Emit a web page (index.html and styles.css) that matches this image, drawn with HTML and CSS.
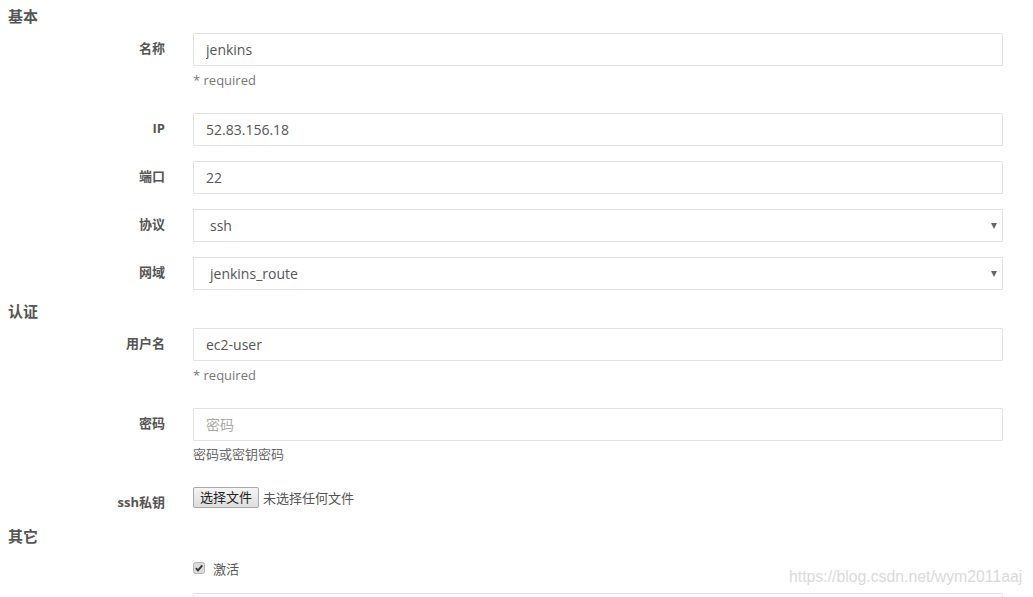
FILE: index.html
```html
<!DOCTYPE html>
<html><head>
<meta charset="utf-8">
<title>资产</title>
<link rel="stylesheet" href="styles.css">
</head><body>
<div class="asset_form">
	<h4 class="section">基本</h4>
	<div class="form_group">
		<label class="ctl_label">名称</label>
		<div class="ctl">
			<input type="text" class="textinput" value="jenkins">
			<p class="help">* required</p>
		</div>
	</div>
	<div class="form_group">
		<label class="ctl_label">IP</label>
		<div class="ctl"><input type="text" class="textinput" value="52.83.156.18"></div>
	</div>
	<div class="form_group">
		<label class="ctl_label">端口</label>
		<div class="ctl"><input type="text" class="textinput" value="22"></div>
	</div>
	<div class="form_group">
		<label class="ctl_label">协议</label>
		<div class="ctl"><div class="select"><span>ssh</span></div></div>
	</div>
	<div class="form_group last">
		<label class="ctl_label">网域</label>
		<div class="ctl"><div class="select"><span>jenkins_route</span></div></div>
	</div>

	<h4 class="section">认证</h4>
	<div class="form_group">
		<label class="ctl_label">用户名</label>
		<div class="ctl">
			<input type="text" class="textinput" value="ec2-user">
			<p class="help">* required</p>
		</div>
	</div>
	<div class="form_group">
		<label class="ctl_label">密码</label>
		<div class="ctl">
			<input type="password" class="textinput" placeholder="密码">
			<p class="help help_tip">密码或密钥密码</p>
		</div>
	</div>
	<div class="form_group file_group">
		<label class="ctl_label">ssh私钥</label>
		<div class="ctl file_ctl">
			<span class="file_btn">选择文件</span><span class="file_name">未选择任何文件</span>
		</div>
	</div>

	<h4 class="section">其它</h4>
	<div class="form_group check_group">
		<div class="ctl">
			<label class="check">
				<svg width="12" height="12" viewBox="0 0 12 12"><rect x="0.5" y="0.5" width="11" height="11" rx="2" fill="#dcdcdc" stroke="#b5b5b5"/><path d="M2.8 6.2 L5 8.4 L9.3 3.4" fill="none" stroke="#333" stroke-width="1.8"/></svg>
				<span>激活</span>
			</label>
		</div>
	</div>
	<div class="form_group">
		<div class="ctl"><input type="text" class="textinput"></div>
	</div>
</div>
<div class="watermark">https://blog.csdn.net/wym2011aaj</div>
</body></html>
```
FILE: styles.css
```css
html, body {margin: 0; padding: 0; background: #fff; overflow: hidden;}
body {font-family: "Open Sans", "Noto Sans CJK SC", sans-serif; color: #555; font-size: 13px;}
.asset_form {padding: 4px 30px 0 0;}
.section {margin: 0 0 5px 0; padding-left: 8px; font-size: 15px; line-height: 24px; font-weight: bold; color: #555;}
.form_group {display: grid; grid-template-columns: 165px 1fr; column-gap: 28px; margin-bottom: 15px;}
.form_group.last {margin-bottom: 9px;}
.ctl_label {padding-top: 7px; line-height: 16px; text-align: right; font-weight: bold; font-size: 13px; color: #555;}
.ctl {grid-column: 2;}
.textinput {display: block; box-sizing: border-box; width: 100%; height: 33px; margin: 0; padding: 0 12px; border: 1px solid #e3e3e3; border-radius: 1px; background: #fff; font-family: inherit; font-size: 14px; color: #555; outline: none;}
.textinput::placeholder {color: #aaa;}
.help {margin: 4px 0 8px 0; line-height: 20px; font-size: 13px; color: #777;}
.help_tip {margin-top: 3px; color: #666;}
.select {position: relative; box-sizing: border-box; height: 33px; line-height: 31px; padding: 0 16px; border: 1px solid #e3e3e3; font-size: 14px; color: #555;}
.select::after {content: ""; position: absolute; right: 5px; top: 13px; border-left: 3.5px solid transparent; border-right: 3.5px solid transparent; border-top: 6px solid #666;}
.file_group {margin-bottom: 14px;}
.file_ctl {display: flex; align-items: center; height: 21px;}
.file_btn {box-sizing: border-box; height: 21px; line-height: 19px; padding: 0 6px; border: 1px solid #a9a9a9; border-radius: 2px; background: linear-gradient(#f4f4f4, #dedede); color: #222; font-size: 13px;}
.file_name {margin-left: 4px; font-size: 13px; color: #555;}
.check_group {margin-bottom: 10px;}
.check {display: flex; align-items: center; height: 30px; color: #555; font-size: 13px;}
.check svg {margin-right: 8px;}
.watermark {position: absolute; left: 789px; top: 568px; font-family: "Liberation Sans", Arial, sans-serif; font-size: 15.8px; color: #dadada;}
```
